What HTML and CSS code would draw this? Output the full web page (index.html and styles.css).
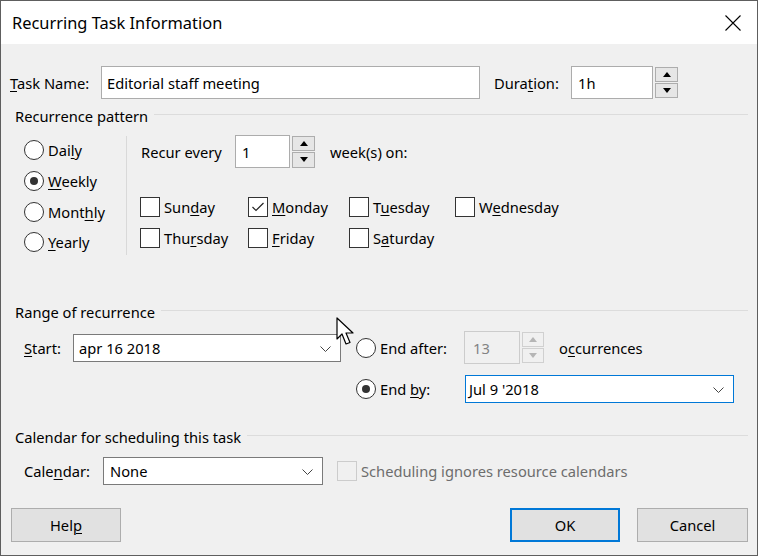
FILE: index.html
```html
<!DOCTYPE html>
<html>
<head>
<meta charset="utf-8">
<link rel="stylesheet" href="styles.css">
</head>
<body>
<div class="window">
  <div class="titlebar">
    <span class="title">Recurring Task Information</span>
    <svg class="close" width="16" height="16" viewBox="0 0 16 16"><path d="M0.5 0.5 L15.5 15.5 M15.5 0.5 L0.5 15.5" stroke="#000" stroke-width="1.1" fill="none"/></svg>
  </div>
  <div class="content">
    <div class="task-row">
      <span class="lbl task-lbl"><u>T</u>ask Name:</span>
      <div class="edit task-name">Editorial staff meeting</div>
      <span class="lbl dur-lbl">Dura<u>t</u>ion:</span>
      <div class="edit dur">1h</div>
      <div class="spin"><span class="sb up"><i></i></span><span class="sb down"><i></i></span></div>
    </div>

    <div class="group-head"><span>Recurrence pattern</span><i></i></div>
    <div class="pattern">
      <div class="radios">
        <div class="radio-row"><span class="radio"></span><span class="rl">Dai<u>l</u>y</span></div>
        <div class="radio-row"><span class="radio on"></span><span class="rl"><u>W</u>eekly</span></div>
        <div class="radio-row"><span class="radio"></span><span class="rl">Mont<u>h</u>ly</span></div>
        <div class="radio-row"><span class="radio"></span><span class="rl"><u>Y</u>early</span></div>
      </div>
      <div class="vsep"></div>
      <div class="weekly">
        <div class="recur-row">
          <span class="lbl recur-lbl">Recur every</span>
          <div class="edit recur">1</div>
          <div class="spin"><span class="sb up"><i></i></span><span class="sb down"><i></i></span></div>
          <span class="lbl weeks">week(s) on:</span>
        </div>
        <div class="days">
          <div class="day"><span class="cb"></span><span>Sun<u>d</u>ay</span></div>
          <div class="day"><span class="cb checked"><svg width="18" height="18" viewBox="0 0 18 18"><path d="M3.5 9 L7 12.5 L14.5 5" stroke="#222" stroke-width="1.2" fill="none"/></svg></span><span><u>M</u>onday</span></div>
          <div class="day"><span class="cb"></span><span>T<u>u</u>esday</span></div>
          <div class="day"><span class="cb"></span><span>W<u>e</u>dnesday</span></div>
          <div class="day"><span class="cb"></span><span>Thu<u>r</u>sday</span></div>
          <div class="day"><span class="cb"></span><span><u>F</u>riday</span></div>
          <div class="day"><span class="cb"></span><span>S<u>a</u>turday</span></div>
        </div>
      </div>
    </div>

    <div class="group-head range-head"><span>Range of recurrence</span><i></i></div>
    <div class="range">
      <span class="lbl"><u>S</u>tart:</span>
      <div class="combo start">apr 16 2018<svg class="chev" width="11" height="6" viewBox="0 0 11 6"><path d="M0.5 0.5 L5.5 5.5 L10.5 0.5" stroke="#444" stroke-width="1" fill="none"/></svg></div>
      <div class="radio-row end-opt"><span class="radio"></span><span class="rl">End after:</span></div>
      <div class="after">
        <div class="edit occ disabled">13</div>
        <div class="spin dis"><span class="sb up"><i></i></span><span class="sb down"><i></i></span></div>
        <span class="lbl occ-lbl">o<u>c</u>currences</span>
      </div>
      <span></span>
      <span></span>
      <div class="radio-row end-opt"><span class="radio on"></span><span class="rl">End <u>b</u>y:</span></div>
      <div class="combo endby">Jul 9 '2018<svg class="chev" width="11" height="6" viewBox="0 0 11 6"><path d="M0.5 0.5 L5.5 5.5 L10.5 0.5" stroke="#444" stroke-width="1" fill="none"/></svg></div>
    </div>

    <div class="group-head cal-head"><span>Calendar for scheduling this task</span><i></i></div>
    <div class="cal-row">
      <span class="lbl cal-lbl">Cale<u>n</u>dar:</span>
      <div class="combo cal">None<svg class="chev" width="11" height="6" viewBox="0 0 11 6"><path d="M0.5 0.5 L5.5 5.5 L10.5 0.5" stroke="#444" stroke-width="1" fill="none"/></svg></div>
      <span class="cb dis-cb"></span>
      <span class="dis-text">Scheduling ignores resource calendars</span>
    </div>

    <div class="buttons">
      <button class="btn">Hel<u>p</u></button>
      <span class="spacer"></span>
      <button class="btn ok">OK</button>
      <button class="btn cancel">Cancel</button>
    </div>
  </div>
  <svg class="cursor" width="22" height="30" viewBox="0 0 22 30"><path d="M1 1 L1 22 L6 17 L10 27 L14 25.5 L10 16 L17 16 Z" fill="#fff" stroke="#000" stroke-width="1.2" stroke-linejoin="round"/></svg>
</div>
</body>
</html>
```
FILE: styles.css
```css
* { box-sizing: border-box; }
html, body { margin: 0; padding: 0; }
body {
  font-family: "Noto Sans", "Open Sans", sans-serif;
  font-size: 14.7px;
  color: #000;
  background: #f0f0f0;
}
u { text-decoration: underline; text-underline-offset: 2px; text-decoration-thickness: 1px; }
.window {
  position: relative;
  width: 758px;
  height: 556px;
  border: 1px solid #5e5e5e;
  background: #f0f0f0;
  display: flex;
  flex-direction: column;
  overflow: hidden;
}
.titlebar {
  height: 43px;
  flex: none;
  background: #fff;
  display: flex;
  align-items: center;
  padding-left: 11px;
  padding-right: 16px;
}
.title { font-size: 16.4px; flex: 1; padding-bottom: 1px; }
.close { display: block; margin-top: 0; }
.content { flex: 1; display: flex; flex-direction: column; }

.lbl { white-space: nowrap; }
.edit {
  background: #fff;
  border: 1px solid #acacac;
  display: flex;
  align-items: center;
  padding-left: 6px;
}
.spin { display: flex; flex-direction: column; gap: 1px; }
.sb {
  flex: 1;
  background: #e6e6e6;
  border: 1px solid #adadad;
  display: flex;
  align-items: center;
  justify-content: center;
}
.sb i { width: 0; height: 0; border-left: 4.5px solid transparent; border-right: 4.5px solid transparent; }
.up i { border-bottom: 5px solid #000; }
.down i { border-top: 5px solid #000; }
.spin.dis .sb { background: #f0f0f0; border-color: #d0d0d0; }
.spin.dis .up i { border-bottom-color: #b5b5b5; }
.spin.dis .down i { border-top-color: #b5b5b5; }

.task-row { display: flex; align-items: center; height: 33px; margin-top: 22px; padding-left: 9px; }
.task-lbl { width: 91px; }
.task-name { width: 379px; height: 33px; padding-left: 5px; }
.dur-lbl { margin-left: 14px; width: 77px; }
.dur { width: 82px; height: 33px; }
.task-row .spin { margin-left: 2px; width: 23px; height: 31px; }

.group-head { display: flex; height: 20px; line-height: 20px; margin-top: 7px; padding-left: 14px; padding-right: 9px; }
.group-head span { white-space: nowrap; }
.group-head i { flex: 1; height: 1px; background: #dcdcdc; margin-top: 8px; margin-left: 6px; }

.pattern { display: flex; height: 120px; margin-top: 9px; }
.radios { width: 125px; padding-left: 23px; }
.radio-row { display: flex; align-items: center; height: 30.67px; }
.radio {
  width: 20px; height: 20px; border-radius: 50%;
  border: 1px solid #333; background: #fff;
  display: flex; align-items: center; justify-content: center;
  flex: none;
}
.radio.on::after { content: ""; width: 8px; height: 8px; border-radius: 50%; background: #333; }
.rl { margin-left: 4px; white-space: nowrap; }
.vsep { width: 1px; background: #d9d9d9; margin-top: 1px; }
.weekly { padding-left: 13px; }
.recur-row { display: flex; align-items: center; height: 33px; }
.recur-lbl { width: 95px; padding-left: 1px; }
.recur { width: 55px; height: 33px; }
.recur-row .spin { margin-left: 2px; width: 23px; height: 32px; }
.weeks { margin-left: 15px; }
.days { display: grid; grid-template-columns: 108px 101px 106px auto; row-gap: 11px; margin-top: 29px; }
.day { display: flex; align-items: center; height: 20px; white-space: nowrap; }
.cb {
  width: 20px; height: 20px; flex: none;
  border: 1px solid #333; background: #fff;
  margin-right: 4px;
  display: flex; align-items: center; justify-content: center;
}

.range-head { margin-top: 47px; }
.range {
  display: grid;
  grid-template-columns: 49px 268px 123px auto;
  grid-template-rows: 33px 28px;
  row-gap: 11px;
  align-items: center;
  padding-left: 23px;
  margin-top: 9px;
}
.combo {
  position: relative;
  background: #fff;
  border: 1px solid #7a7a7a;
  height: 28px;
  display: flex;
  align-items: center;
  padding-left: 6px;
}
.chev { position: absolute; right: 9px; top: 11px; }
.start { width: 268px; padding-left: 5px; }
.end-opt { padding-left: 15px; height: 33px; }
.after { display: flex; align-items: center; height: 33px; }
.occ { width: 56px; height: 33px; }
.edit.disabled { background: #f0f0f0; border-color: #cccccc; color: #838383; padding-left: 8px; }
.after .spin { margin-left: 2px; width: 22px; height: 31px; }
.occ-lbl { margin-left: 15px; }
.endby { width: 269px; margin-left: 1px; border-color: #0078d7; padding-left: 3px; }

.cal-head { margin-top: 24px; }
.cal-row { display: flex; align-items: center; height: 28px; margin-top: 10px; padding-left: 23px; }
.cal-lbl { width: 79px; }
.cal { width: 220px; }
.dis-cb { margin-left: 14px; background: #f0f0f0; border-color: #cccccc; }
.dis-text { color: #6d6d6d; white-space: nowrap; }

.buttons { display: flex; align-items: center; height: 34px; margin-top: 23px; padding-left: 10px; padding-right: 9px; }
.btn {
  font-family: inherit;
  font-size: 14.7px;
  color: #000;
  width: 110px;
  height: 34px;
  background: #e1e1e1;
  border: 1px solid #adadad;
  padding: 0;
}
.spacer { flex: 1; }
.ok { border: 2px solid #0078d7; }
.cancel { margin-left: 17px; width: 111px; }

.cursor { position: absolute; left: 335px; top: 316px; }
```
